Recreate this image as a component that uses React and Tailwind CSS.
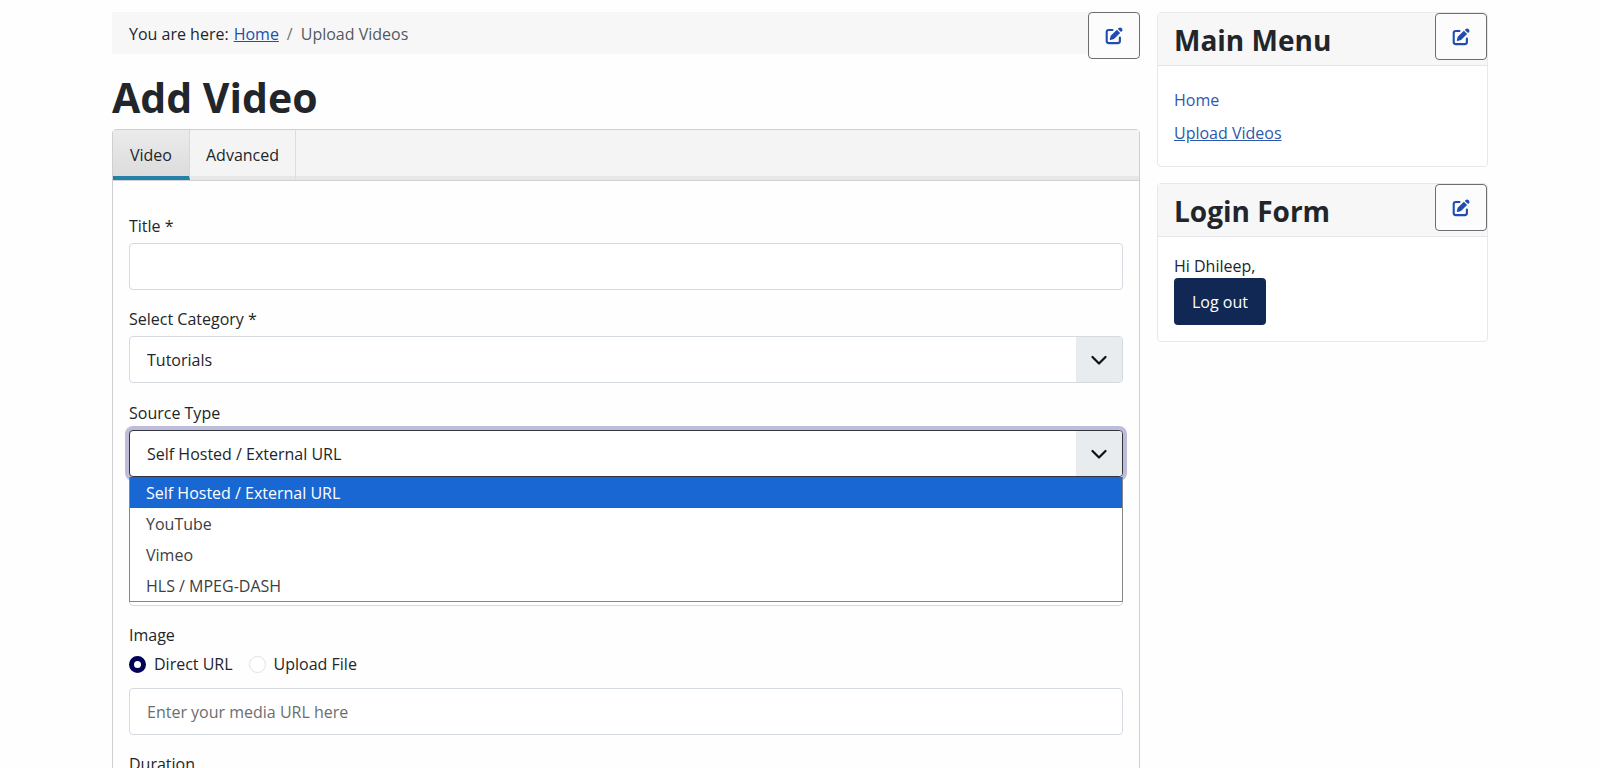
import React, { useState } from 'react';

const sourceTypes = ['Self Hosted / External URL', 'YouTube', 'Vimeo', 'HLS / MPEG-DASH'];
const inputClass = 'block w-full h-[47px] px-[17px] bg-white border border-[#d5dae0] rounded-[4px] placeholder:text-[#6a6e72] outline-none';
const labelClass = 'block w-fit leading-6 mb-[5px]';

const EditIcon = () => (
    <svg viewBox="0 0 18 18" className="w-[18px] h-[18px]" fill="none" aria-hidden="true">
        <path d="M7.5 3H3.8C2.6 3 1.7 3.9 1.7 5.1v8.9c0 1.2.9 2.1 2.1 2.1h9c1.2 0 2.1-.9 2.1-2.1v-3.5" stroke="#1f4cae" strokeWidth="2.1" strokeLinecap="round" />
        <path d="M11.9 2.8l3.2 3.2-6.1 6-3.5.9c-.4.1-.8-.2-.7-.7l.9-3.4zM12.8 1.9l.9-.9c.8-.8 2-.8 2.8 0l.4.4c.8.8.8 2 0 2.8l-.9.9z" fill="#1f4cae" />
    </svg>
);

const EditButton = ({ label }) => (
    <button type="button" aria-label={label} className="shrink-0 w-[52px] h-[47px] flex items-center justify-center bg-[#fcfcfc] border border-[#6b6d70] rounded-[4px]">
        <EditIcon />
    </button>
);

const SelectBox = ({ id, focused, children, ...props }) => (
    <div className="relative">
        <select
            id={id}
            className={`${focused ? 'border-[#34343c] ring-4 ring-[#bdbcd9]' : 'border-[#d5dae0]'} block w-full h-[47px] pl-[17px] pr-14 appearance-none bg-white border rounded-[4px] outline-none`}
            {...props}
        >
            {children}
        </select>
        <span className="absolute right-px inset-y-px w-[46px] flex items-center justify-center bg-[#e9ecef] rounded-r-[3px] pointer-events-none">
            <svg viewBox="0 0 16 16" className="w-4 h-4" fill="none" aria-hidden="true">
                <path d="M1.5 5l6.5 6.5L14.5 5" stroke="#101114" strokeWidth="2.2" strokeLinecap="round" strokeLinejoin="round" />
            </svg>
        </span>
    </div>
);

const Radio = ({ label, ...props }) => (
    <label className="flex items-center gap-2">
        <input
            type="radio"
            className="w-[17px] h-[17px] appearance-none rounded-full bg-white border border-[#dfe2e6] checked:border-[5px] checked:border-[#010156]"
            {...props}
        />
        {label}
    </label>
);

const SideCard = ({ title, children }) => (
    <section className="border border-[#e6e8eb] rounded-[4px] bg-white">
        <header className="flex items-start justify-between h-[53px] pl-4 bg-[#f7f7f7] border-b border-[#e4e7ea]">
            <h2 className="text-[28px] leading-[54px] font-bold">{title}</h2>
            <EditButton label={`Edit ${title}`} />
        </header>
        {children}
    </section>
);

const App = () => {
    const [category, setCategory] = useState('Tutorials');
    const [source, setSource] = useState(sourceTypes[0]);
    const [open, setOpen] = useState(true);
    const [mode, setMode] = useState('url');

    const pick = (type) => {
        setSource(type);
        setOpen(false);
    };

    return (
        <div className="h-screen overflow-hidden bg-[#fefefe] text-[#22262a] text-[16px] leading-6 font-['Open_Sans','Noto_Sans',sans-serif]">
            <div className="max-w-[1376px] mx-auto pt-3 flex items-start gap-[17px]">
                <main className="flex-1 min-w-0">
                    <div className="relative">
                        <nav aria-label="Breadcrumbs" className="flex items-center h-[42px] px-[17px] pt-0.5 bg-[#f7f7f7]">
                            <span className="mr-[5px]">You are here:</span>
                            <a href="#home" className="text-[#224faa] underline">Home</a>
                            <span className="mx-2 text-[#6c757d]">/</span>
                            <span className="text-[#54595f]">Upload Videos</span>
                        </nav>
                        <div className="absolute right-0 top-0">
                            <EditButton label="Edit breadcrumbs" />
                        </div>
                    </div>

                    <h1 className="mt-[17px] mb-[6px] text-[41px] leading-[52px] font-bold">Add Video</h1>

                    <div className="border border-[#cfcfd1] rounded-[4px]">
                        <div role="tablist" className="flex h-[51px] bg-[#f4f4f4] border-b border-[#d2d2d4] shadow-[inset_0_-4px_0_#e7e7e7]">
                            <button type="button" role="tab" aria-selected="true" className="px-[17px] pt-1 bg-linear-to-b from-[#ebebeb] to-[#dcdcdc] border-r border-r-[#d8d8d8] border-b-4 border-b-[#2580a8]">Video</button>
                            <button type="button" role="tab" aria-selected="false" className="px-4 border-r border-[#dedede]">Advanced</button>
                        </div>

                        <form className="px-4 pt-[33px]">
                            <div className="mb-[17px]">
                                <label htmlFor="title" className={labelClass}>Title *</label>
                                <input id="title" type="text" className={inputClass} />
                            </div>

                            <div className="mb-[18px]">
                                <label htmlFor="category" className={labelClass}>Select Category *</label>
                                <SelectBox id="category" value={category} onChange={(e) => setCategory(e.target.value)}>
                                    <option>Tutorials</option>
                                </SelectBox>
                            </div>

                            <div className="relative">
                                <label htmlFor="source" className={labelClass}>Source Type</label>
                                <SelectBox
                                    id="source"
                                    focused={open}
                                    value={source}
                                    onMouseDown={(e) => { e.preventDefault(); setOpen(!open); }}
                                    onChange={(e) => setSource(e.target.value)}
                                >
                                    {sourceTypes.map((type) => <option key={type}>{type}</option>)}
                                </SelectBox>
                                {open && (
                                    <ul role="listbox" aria-label="Source Type" className="absolute z-10 inset-x-0 top-full bg-white border border-t-0 border-[#85878a]">
                                        {sourceTypes.map((type) => (
                                            <li
                                                key={type}
                                                role="option"
                                                aria-selected={type === source}
                                                onClick={() => pick(type)}
                                                className="h-[31px] px-4 leading-[33px] text-[#3c4044] aria-selected:bg-[#1967d2] aria-selected:text-white"
                                            >
                                                {type}
                                            </li>
                                        ))}
                                    </ul>
                                )}
                            </div>

                            <div className="pt-[82px] mb-[17px]">
                                <input type="text" aria-label="Video" className={inputClass} />
                            </div>

                            <div className="mb-[17px]">
                                <label htmlFor="image" className={labelClass}>Image</label>
                                <div className="flex gap-4 mb-3">
                                    <Radio name="image-mode" label="Direct URL" checked={mode === 'url'} onChange={() => setMode('url')} />
                                    <Radio name="image-mode" label="Upload File" checked={mode === 'file'} onChange={() => setMode('file')} />
                                </div>
                                <input id="image" type="text" placeholder="Enter your media URL here" className={inputClass} />
                            </div>

                            <div className="mb-[17px]">
                                <label htmlFor="duration" className={labelClass}>Duration</label>
                                <input id="duration" type="text" className={inputClass} />
                            </div>
                        </form>
                    </div>
                </main>

                <aside className="w-[331px] shrink-0 flex flex-col gap-4">
                    <SideCard title="Main Menu">
                        <ul className="px-4 pt-[22px] pb-[21px] flex flex-col gap-[9px] text-[#2f58ac]">
                            <li><a href="#home">Home</a></li>
                            <li><a href="#upload" className="underline">Upload Videos</a></li>
                        </ul>
                    </SideCard>
                    <SideCard title="Login Form">
                        <div className="px-4 pt-[17px] pb-4">
                            <p>Hi Dhileep,</p>
                            <button type="button" className="h-[47px] px-[18px] rounded-[4px] bg-[#112855] text-white">Log out</button>
                        </div>
                    </SideCard>
                </aside>
            </div>
        </div>
    );
};

export default App;
